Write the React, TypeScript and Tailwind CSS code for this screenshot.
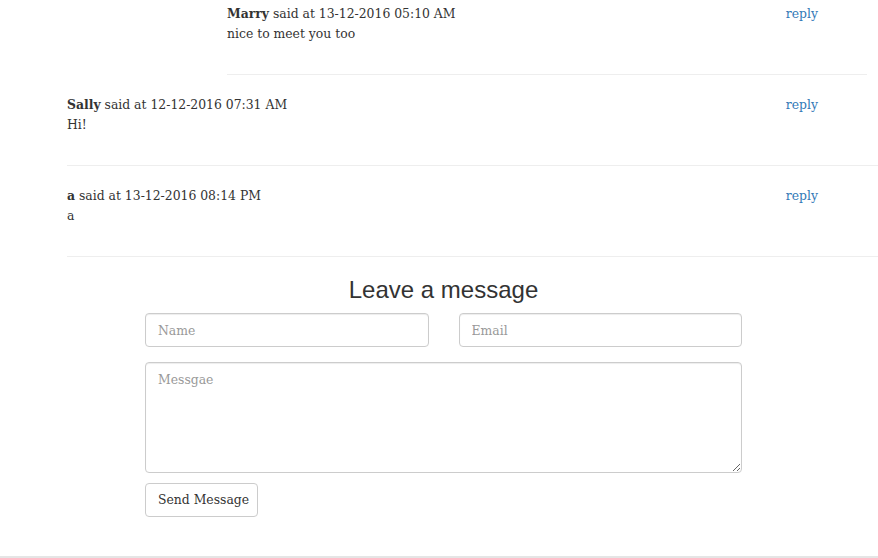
import React from 'react';

type Comment = {
  name: string;
  date: string;
  text: string;
  nested?: boolean;
};

const comments: Comment[] = [
  { name: 'Marry', date: '13-12-2016 05:10 AM', text: 'nice to meet you too', nested: true },
  { name: 'Sally', date: '12-12-2016 07:31 AM', text: 'Hi!' },
  { name: 'a', date: '13-12-2016 08:14 PM', text: 'a' },
];

const serif = { fontFamily: 'Georgia, "DejaVu Serif", serif' };

const CommentRow: React.FC<{ c: Comment; first: boolean }> = ({ c, first }) => (
  <div
    className={`flex justify-between border-b border-[#eeeeee] pb-[30px] ${
      first ? 'pt-[4px]' : 'pt-[20px]'
    } ${c.nested ? 'ml-[160px] mr-[11px] pr-[49px]' : 'pr-[60px]'}`}
  >
    <div className="text-[12.4px] leading-[20px] text-[#333333]">
      <div>
        <span className="font-bold">{c.name}</span> said at {c.date}
      </div>
      <div>{c.text}</div>
    </div>
    <a href="#" className="text-[12.4px] leading-[20px] text-[#337ab7]">
      reply
    </a>
  </div>
);

const App: React.FC = () => {
  return (
    <div className="w-[878px] h-[558px] overflow-hidden bg-white" style={serif}>
      <div className="pl-[67px]">
        {comments.map((c, i) => (
          <CommentRow key={i} c={c} first={i === 0} />
        ))}
      </div>

      {/* Leave a message form */}
      <div className="ml-[145px] w-[597px]">
        <h3 className="mt-[19px] mb-[10px] text-center text-[24px] leading-[27px] text-[#333333] font-['Liberation_Sans',Arial,sans-serif]">
          Leave a message
        </h3>
        <div className="grid grid-cols-2 gap-[30px]">
          <input
            placeholder="Name"
            className="h-[34px] px-[12px] text-[12.4px] text-[#555] placeholder:text-[#999] border border-[#cccccc] rounded-[4px] shadow-[inset_0_1px_1px_rgba(0,0,0,0.075)] outline-none"
          />
          <input
            placeholder="Email"
            className="h-[34px] px-[12px] text-[12.4px] text-[#555] placeholder:text-[#999] border border-[#cccccc] rounded-[4px] shadow-[inset_0_1px_1px_rgba(0,0,0,0.075)] outline-none"
          />
        </div>
        <textarea
          placeholder="Messgae"
          className="block mt-[15px] w-full h-[111px] px-[12px] py-[8px] text-[12.4px] text-[#555] placeholder:text-[#999] border border-[#cccccc] rounded-[4px] shadow-[inset_0_1px_1px_rgba(0,0,0,0.075)] outline-none"
        />
        <button className="mt-[10px] h-[34px] w-[113px] pl-[12px] text-left text-[12.4px] text-[#333] bg-white border border-[#cccccc] rounded-[4px]">
          Send Message
        </button>
      </div>

      <div className="mt-[39px] border-t-2 border-[#e5e5e5]" />
    </div>
  );
};

export default App;
